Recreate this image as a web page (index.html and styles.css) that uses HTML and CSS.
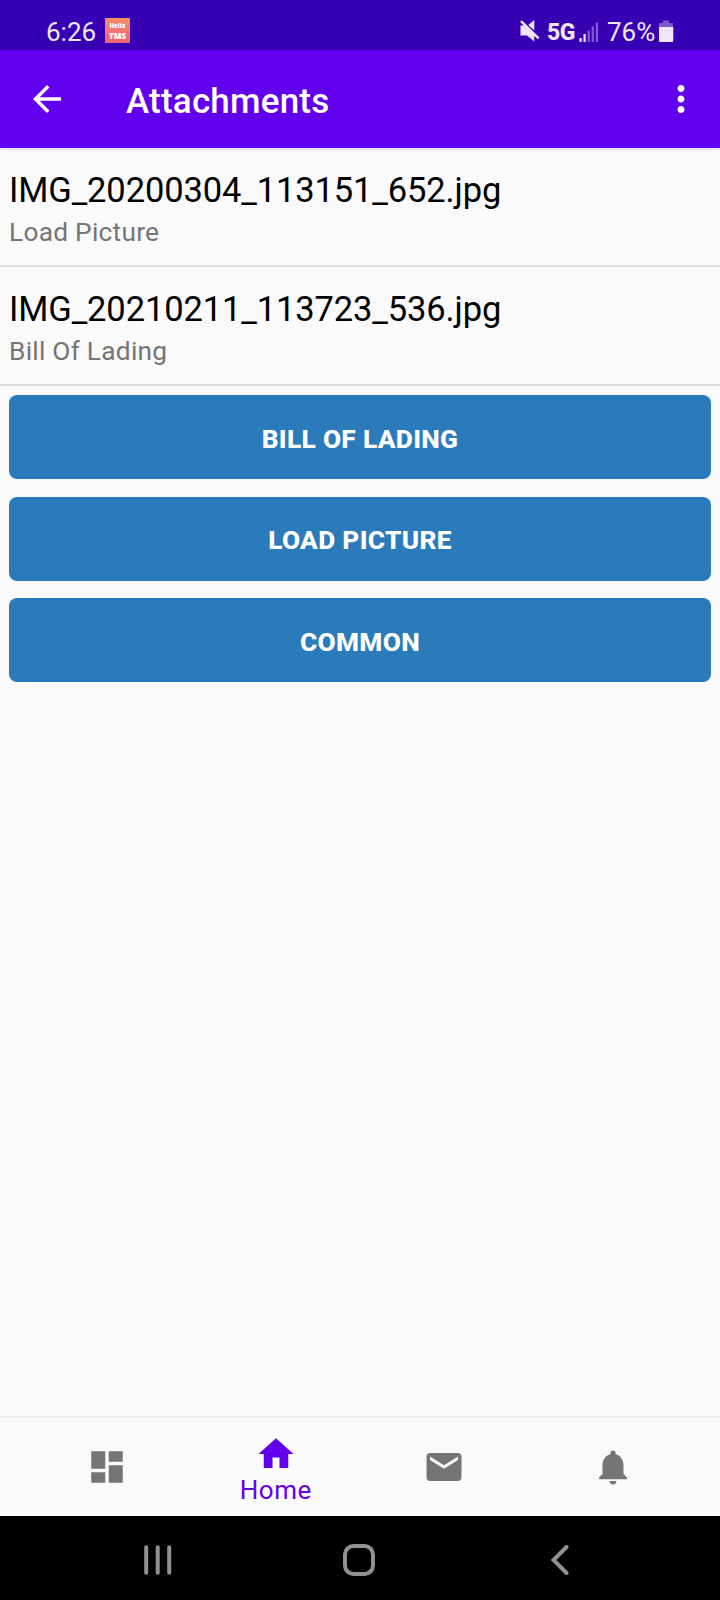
FILE: index.html
```html
<!DOCTYPE html>
<html lang="en">
<head>
    <meta charset="utf-8">
    <title>Attachments</title>
    <link rel="stylesheet" href="styles.css">
</head>
<body>
    <div class="status-bar">
        <span class="clock">6:26</span>
        <div class="app-badge">
            <span class="badge-top">Helix</span>
            <span class="badge-bottom">TMS</span>
        </div>
        <div class="status-right">
            <svg class="mute-icon" width="20" height="22" viewBox="0 0 20 22">
                <path d="M0.5 5.5H5L14.3 14V21.5L7 15.5H0.5zM8.3 5L14.3 0V10.5z" fill="#efe6fc"/>
                <path d="M1 1.2L18.6 18.4" stroke="#efe6fc" stroke-width="2.4"/>
            </svg>
            <span class="network">5G</span>
            <svg class="signal-icon" width="20" height="21" viewBox="0 0 20 21">
                <path d="M0.5 16H2.7V20H0.5zM4.5 12H6.7V20H4.5z" fill="#efe6fc"/>
                <path d="M8.6 8.5H10.8V20H8.6zM12.7 4.5H14.9V20H12.7zM16.8 0.5H19V20H16.8z" fill="#7f5dd0"/>
            </svg>
            <span class="percent">76%</span>
            <svg class="battery-icon" width="15" height="22" viewBox="0 0 15 22">
                <path d="M4 0.5H10V3H14V7H0V3H4z" fill="#8058cc"/>
                <path d="M0 7H14.3V20.5Q14.3 22 13 22H1.3Q0 22 0 20.5z" fill="#efe6fc"/>
            </svg>
        </div>
    </div>

    <header class="app-bar">
        <svg class="back-icon" width="42" height="42" viewBox="0 0 24 24">
            <path d="M20 11H7.83l5.59-5.59L12 4l-8 8 8 8 1.41-1.41L7.83 13H20v-2z" fill="#fff"/>
        </svg>
        <h1>Attachments</h1>
        <svg class="more-icon" width="42" height="42" viewBox="0 0 24 24">
            <path d="M12 8c1.1 0 2-.9 2-2s-.9-2-2-2-2 .9-2 2 .9 2 2 2zm0 2c-1.1 0-2 .9-2 2s.9 2 2 2 2-.9 2-2-.9-2-2-2zm0 6c-1.1 0-2 .9-2 2s.9 2 2 2 2-.9 2-2-.9-2-2-2z" fill="#fff"/>
        </svg>
    </header>

    <main>
        <ul class="file-list">
            <li>
                <div class="file-name">IMG_20200304_113151_652.jpg</div>
                <div class="file-type">Load Picture</div>
            </li>
            <li>
                <div class="file-name">IMG_20210211_113723_536.jpg</div>
                <div class="file-type">Bill Of Lading</div>
            </li>
        </ul>
        <div class="buttons">
            <button type="button">BILL OF LADING</button>
            <button type="button">LOAD PICTURE</button>
            <button type="button">COMMON</button>
        </div>
    </main>

    <nav class="bottom-nav">
        <a class="nav-item">
            <svg width="42" height="42" viewBox="0 0 24 24">
                <path d="M3 13h8V3H3v10zm0 8h8v-6H3v6zm10 0h8V11h-8v10zm0-18v6h8V3h-8z"/>
            </svg>
        </a>
        <a class="nav-item active">
            <svg width="42" height="42" viewBox="0 0 24 24">
                <path d="M10 20v-6h4v6h5v-8h3L12 3 2 12h3v8z"/>
            </svg>
            <span>Home</span>
        </a>
        <a class="nav-item">
            <svg width="42" height="42" viewBox="0 0 24 24">
                <path d="M20 4H4c-1.1 0-1.99.9-1.99 2L2 18c0 1.1.9 2 2 2h16c1.1 0 2-.9 2-2V6c0-1.1-.9-2-2-2zm0 4l-8 5-8-5V6l8 5 8-5v2z"/>
            </svg>
        </a>
        <a class="nav-item">
            <svg width="42" height="42" viewBox="0 0 24 24">
                <path d="M12 22c1.1 0 2-.9 2-2h-4c0 1.1.89 2 2 2zm6-6v-5c0-3.07-1.64-5.64-4.5-6.32V4c0-.83-.67-1.5-1.5-1.5s-1.5.67-1.5 1.5v.68C7.63 5.36 6 7.92 6 11v5l-2 2v1h16v-1l-2-2z"/>
            </svg>
        </a>
    </nav>

    <div class="system-nav">
        <svg width="28" height="30" viewBox="0 0 28 30">
            <path d="M2.2 2.2V27.8M13.7 2.2V27.8M25.2 2.2V27.8"/>
        </svg>
        <svg width="32" height="32" viewBox="0 0 32 32">
            <rect x="2" y="2" width="28" height="28" rx="8.5"/>
        </svg>
        <svg width="18" height="30" viewBox="0 0 18 30">
            <path d="M15.5 2L2.5 15L15.5 28"/>
        </svg>
    </div>
</body>
</html>
```
FILE: styles.css
```css
* {
    box-sizing: border-box;
}

body {
    margin: 0;
    height: 1600px;
    display: flex;
    flex-direction: column;
    font-family: Roboto, "Liberation Sans", sans-serif;
    background-color: #fafafa;
}

svg {
    display: block;
    flex-shrink: 0;
}

.status-bar {
    height: 50px;
    padding: 13px 46px 0 46px;
    display: flex;
    align-items: flex-start;
    background-color: #3700b3;
    color: #efe6fc;
    font-size: 26px;
    line-height: 39px;
}

.clock {
    width: 59px;
}

.app-badge {
    width: 25px;
    height: 25px;
    margin-top: 5px;
    padding-top: 4px;
    display: flex;
    flex-direction: column;
    align-items: center;
    background: linear-gradient(#f58d68, #ee6078);
    color: #fff;
    font-family: "Open Sans", sans-serif;
    font-weight: 800;
}

.badge-top {
    font-size: 6px;
    line-height: 8px;
}

.badge-bottom {
    font-size: 8px;
    line-height: 12px;
}

.status-right {
    margin-left: auto;
    display: flex;
    align-items: flex-start;
}

.mute-icon {
    margin: 7px 7px 0 0;
}

.network {
    width: 32px;
    font-size: 23px;
    font-weight: 800;
    letter-spacing: -0.5px;
}

.signal-icon {
    margin: 9px 8px 0 0;
}

.percent {
    width: 52px;
}

.battery-icon {
    margin-top: 7px;
}

.app-bar {
    height: 98px;
    padding: 0 18px 0 26px;
    display: flex;
    align-items: center;
    background-color: #6200ee;
    color: #fff;
    box-shadow: 0 1px 4px rgba(0, 0, 0, 0.15);
}

.app-bar h1 {
    margin: 4px auto 0 58px;
    font-size: 35px;
    font-weight: 500;
    letter-spacing: 0.2px;
}

main {
    flex: 1;
}

.file-list {
    margin: 0;
    padding: 0;
    list-style: none;
}

.file-list li {
    height: 119px;
    padding: 22px 9px 0;
    border-bottom: 2px solid #dedede;
}

.file-name {
    font-size: 34.5px;
    line-height: 41px;
    letter-spacing: -0.12px;
    color: #000;
}

.file-type {
    font-size: 26.3px;
    line-height: 42px;
    letter-spacing: 0.25px;
    color: #757575;
}

.buttons {
    padding: 9px;
    display: flex;
    flex-direction: column;
    gap: 17.5px;
}

.buttons button {
    height: 84px;
    border: none;
    border-radius: 8px;
    padding: 3px 0 0;
    background-color: #2b7bba;
    color: #fff;
    font-family: inherit;
    font-size: 26.3px;
    font-weight: 800;
    letter-spacing: 0.3px;
}

.bottom-nav {
    height: 100px;
    padding: 0 23px;
    display: flex;
    border-top: 2px solid #f1f1f1;
}

.nav-item {
    flex: 1;
    display: flex;
    flex-direction: column;
    align-items: center;
    justify-content: center;
    color: #757575;
}

.nav-item svg {
    fill: currentColor;
}

.active {
    padding-top: 3px;
    color: #6200ee;
}

.active span {
    font-size: 26px;
    line-height: 30px;
    letter-spacing: 0.5px;
}

.system-nav {
    height: 84px;
    padding: 3px 150px 0 144px;
    display: flex;
    align-items: center;
    gap: 171px;
    background-color: #000;
}

.system-nav svg:last-child {
    margin-left: 5px;
}

.system-nav svg {
    fill: none;
    stroke: #919191;
    stroke-width: 4;
    stroke-linecap: round;
}
```
